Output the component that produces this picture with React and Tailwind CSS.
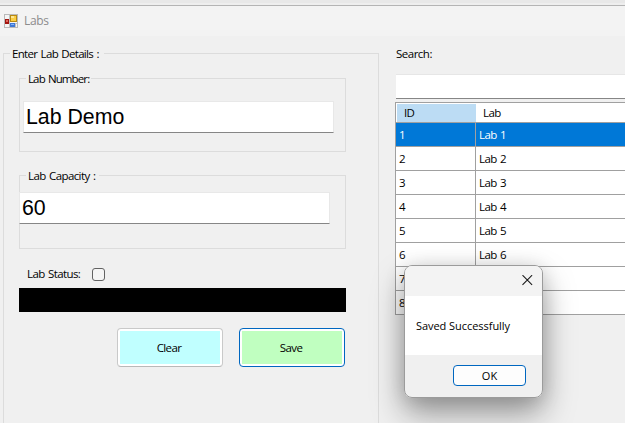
import React from "react";

const labs = [1, 2, 3, 4, 5, 6, 7, 8];

function AppIcon() {
  return (
    <svg width="14" height="14" viewBox="0 0 14 14" shapeRendering="crispEdges">
      <rect x="0.5" y="0.5" width="13" height="13" fill="#f4f4f4" stroke="#b9b9b9" />
      <path d="M5.5 1v12M1 9.5h12M11.5 9v4" stroke="#c0c0c0" fill="none" />
      <rect x="1" y="5" width="4" height="5" fill="#a3150f" />
      <rect x="2" y="6" width="2" height="2" fill="#e0645a" />
      <rect x="6" y="1" width="7" height="7" fill="#b98a12" />
      <rect x="7" y="2" width="5" height="5" fill="#fbcf45" />
      <rect x="7" y="2" width="3" height="2" fill="#fde795" />
      <rect x="6" y="9" width="5" height="4" fill="#3f78d6" />
      <rect x="7" y="10" width="3" height="1" fill="#86b4f5" />
    </svg>
  );
}

function Group({ title, titleClass, className, children }) {
  return (
    <section className={"border border-[#dcdcdc] " + className}>
      <div className={"-mt-[8px] ml-[6px] h-4 bg-[#f0f0f0] pl-[2px] leading-4 whitespace-nowrap " + titleClass}>{title}</div>
      {children}
    </section>
  );
}

function TextBox({ value, className }) {
  return (
    <div
      className={
        "h-8 w-[311px] border border-[#e8e8e8] border-b-[#868686] bg-white pl-[2px] font-['Liberation_Sans',Arial,sans-serif] text-[21.3px] leading-[30px] tracking-[0px] [word-spacing:0px] " +
        className
      }
    >
      {value}
    </div>
  );
}

export default function App() {
  return (
    <div className="relative flex h-[423px] w-[625px] flex-col overflow-hidden bg-[#f0f0f0] font-['Open_Sans','Noto_Sans',sans-serif] text-[11.5px] tracking-[-0.6px] text-black [word-spacing:1px]">
      <div className="h-[5px] shrink-0 border-b-2 border-[#eeeeee] bg-[#e8e8e8]" />
      <header className="flex h-[31px] shrink-0 items-center border-t border-[#b4b4b4] bg-[#f3f3f3] pl-1">
        <AppIcon />
        <span className="ml-[6px] text-[12px] tracking-[-0.3px] text-[#8c8c8c]">Labs</span>
      </header>

      <main className="flex grow">
        <Group title="Enter Lab Details :" titleClass="w-[94px] tracking-[-0.68px]" className="mt-[17px] ml-[3px] h-[390px] w-[376px] shrink-0">
          <div className="flex flex-col pt-[16px] pl-[15px] tracking-[-0.6px]">
            <Group title="Lab Number:" titleClass="w-[65px] tracking-[-0.88px]" className="h-[74px] w-[327px]">
              <TextBox value="Lab Demo" className="mt-[14px] ml-[3px]" />
            </Group>
            <Group title="Lab Capacity :" titleClass="w-[73px]" className="mt-[23px] h-[74px] w-[327px]">
              <TextBox value="60" className="mt-[8px] -ml-px" />
            </Group>
            <div className="mt-[17px] flex h-4 items-center pl-2">
              <span className="w-[65px] whitespace-nowrap">Lab Status:</span>
              <span className="h-[13px] w-[13px] rounded-[3px] border border-[#626262] bg-[#f5f5f5]" />
            </div>
            <div className="mt-[6px] h-6 w-[327px] bg-black" />
            <div className="mt-4 ml-[98px] flex gap-4">
              <div className="h-[39px] w-[106px] rounded-[4px] border border-[#c9c9c9] border-b-[#b8b8b8] bg-white p-[2px]">
                <div className="flex h-full items-center justify-center bg-[#c0ffff] pr-[2px]">Clear</div>
              </div>
              <div className="h-[39px] w-[106px] rounded-[4px] border border-[#0067c0] bg-white p-[2px]">
                <div className="flex h-full items-center justify-center bg-[#c0ffc0] pr-[2px]">Save</div>
              </div>
            </div>
          </div>
        </Group>

        <div className="ml-4 flex w-[230px] shrink-0 flex-col pt-[10px]">
          <div className="h-4 pl-[1px] leading-4 tracking-[-0.5px]">Search:</div>
          <div className="mt-3 ml-[1px] h-[25px] border-t border-b border-t-[#e6e6e6] border-b-[#868686] bg-white" />
          <div className="mt-[3px] border-t border-l border-[#a0a0a0] bg-white">
            <div className="flex h-5 border-b border-[#a0a0a0] pt-px pl-px leading-[18px]">
              <div className="w-[79px] bg-[#bcdcf4] pl-[7px]">ID</div>
              <div className="pl-[7px]">Lab</div>
            </div>
            {labs.map((n) => (
              <div
                key={n}
                className={
                  "flex h-6 border-b border-[#a0a0a0] leading-[23px] " +
                  (n === 1 ? "bg-[#0078d7] text-white" : "bg-white")
                }
              >
                <div className="w-20 border-r border-[#a0a0a0] pl-[3px]">{n}</div>
                <div className="pl-[3px]">Lab {n}</div>
              </div>
            ))}
          </div>
        </div>
      </main>

      <div className="absolute top-[265px] left-[404px] h-[133px] w-[139px] rounded-[8px] shadow-[0_16px_32px_rgba(0,0,0,0.36),0_2px_20px_rgba(0,0,0,0.14)] [word-spacing:0px]">
        <div className="flex h-full flex-col overflow-hidden rounded-[8px] border border-[#9b9b9b] bg-[#f0f0f0]">
          <div className="flex h-[30px] justify-end bg-[#f3f3f3] pt-[9px] pr-[9px]">
            <svg width="11" height="11" viewBox="0 0 11 11">
              <path d="M.5.2l9.6 9.6M10.1.2L.5 9.8" stroke="#1a1a1a" strokeWidth="1.1" fill="none" />
            </svg>
          </div>
          <div className="h-[59px] bg-white pl-[11px] text-[11px] leading-[60px] tracking-[-0.05px] whitespace-nowrap">
            Saved Successfully
          </div>
          <div className="pt-[10px] pl-12">
            <div className="h-[21px] w-[73px] rounded-[4px] border border-[#0067c0] bg-[#fdfdfd] text-center text-[11px] leading-[20px] tracking-[0px]">
              OK
            </div>
          </div>
        </div>
      </div>
    </div>
  );
}
